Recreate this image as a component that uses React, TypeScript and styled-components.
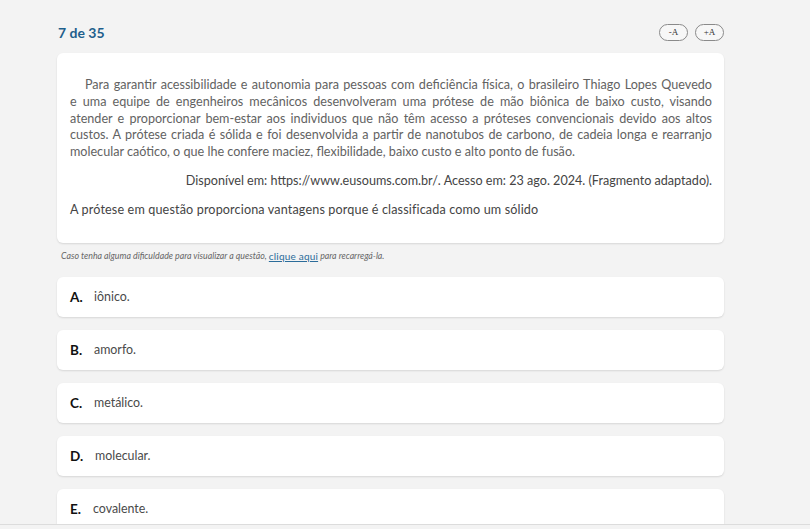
import React from 'react';
import styled, { createGlobalStyle } from 'styled-components';

const GlobalStyle = createGlobalStyle`
  html, body {
    margin: 0;
    padding: 0;
    background: #f3f3f3;
  }
  body {
    font-family: 'Lato', 'Noto Sans', sans-serif;
  }
`;

const Page = styled.div`
  height: 525px;
  overflow: hidden;
  border-bottom: 1px solid #dcdcdc;
  box-sizing: border-box;
`;

const Column = styled.div`
  width: 667px;
  margin-left: 57px;
  display: flex;
  flex-direction: column;
`;

const Header = styled.div`
  display: flex;
  align-items: center;
  justify-content: space-between;
  height: 33px;
  padding-top: 16px;
  margin-bottom: 4px;
`;

const Counter = styled.div`
  font-size: 14px;
  font-weight: 700;
  color: #1e5f8c;
  padding-left: 1px;
`;

const FontButtons = styled.div`
  display: flex;
  gap: 7px;
`;

const FontButton = styled.button`
  width: 29px;
  height: 17px;
  padding: 0;
  border: 1px solid #8a8a8a;
  border-radius: 9px;
  background: #f7f7f7;
  font-family: 'Liberation Serif', serif;
  font-size: 9px;
  color: #333;
  line-height: 15px;
`;

const Card = styled.div`
  background: #fff;
  border-radius: 6px;
  box-shadow: 0 1px 2px rgba(0, 0, 0, 0.12);
`;

const Statement = styled(Card)`
  padding: 24px 12px 24px 13px;
  color: #555;
  font-size: 12.6px;
  line-height: 16.8px;
`;

const Paragraph = styled.p`
  margin: 0;
  color: #626262;
`;

const Line = styled.span<{ $indent?: boolean; $last?: boolean }>`
  display: block;
  text-align: justify;
  text-align-last: ${(p) => (p.$last ? 'left' : 'justify')};
  text-indent: ${(p) => (p.$indent ? '15px' : '0')};
`;

const Source = styled.p`
  margin: 12px 0 0;
  text-align: right;
  color: #444;
`;

const Question = styled.p`
  margin: 12px 0 0;
  color: #444;
  letter-spacing: 0.14px;
`;

const Note = styled.div`
  margin: 6px 0 14px 4px;
  font-size: 8.8px;
  font-style: italic;
  color: #666;
  height: 14px;
  display: flex;
  align-items: center;
  white-space: pre;
`;

const NoteLink = styled.a`
  font-style: normal;
  font-size: 10px;
  color: #2b6c9a;
  text-decoration: underline;
  letter-spacing: 0.2px;
`;

const Options = styled.div`
  display: flex;
  flex-direction: column;
  gap: 13px;
`;

const Option = styled(Card)`
  height: 40px;
  display: flex;
  align-items: center;
  padding-left: 13px;
`;

const Letter = styled.span`
  width: 24px;
  font-size: 13.5px;
  font-weight: 700;
  color: #111;
`;

const OptionText = styled.span<{ $shift?: number }>`
  font-size: 12.4px;
  color: #4a4a4a;
  margin-left: ${(p) => p.$shift ?? 0}px;
`;

const paragraphLines = [
  'Para garantir acessibilidade e autonomia para pessoas com deficiência física, o brasileiro Thiago Lopes Quevedo',
  'e uma equipe de engenheiros mecânicos desenvolveram uma prótese de mão biônica de baixo custo, visando',
  'atender e proporcionar bem-estar aos individuos que não têm acesso a próteses convencionais devido aos altos',
  'custos. A prótese criada é sólida e foi desenvolvida a partir de nanotubos de carbono, de cadeia longa e rearranjo',
  'molecular caótico, o que lhe confere maciez, flexibilidade, baixo custo e alto ponto de fusão.',
];

const options = [
  { letter: 'A.', text: 'iônico.', shift: 0 },
  { letter: 'B.', text: 'amorfo.', shift: 0 },
  { letter: 'C.', text: 'metálico.', shift: 0 },
  { letter: 'D.', text: 'molecular.', shift: 1 },
  { letter: 'E.', text: 'covalente.', shift: -1 },
];

export default function App() {
  return (
    <>
      <GlobalStyle />
      <Page>
        <Column>
          <Header>
            <Counter>7 de 35</Counter>
            <FontButtons>
              <FontButton>-A</FontButton>
              <FontButton>+A</FontButton>
            </FontButtons>
          </Header>
          <Statement>
            <Paragraph>
              {paragraphLines.map((line, i) => (
                <Line key={i} $indent={i === 0} $last={i === paragraphLines.length - 1}>
                  {line}
                </Line>
              ))}
            </Paragraph>
            <Source>
              Disponível em: https://www.eusoums.com.br/. Acesso em: 23 ago. 2024. (Fragmento adaptado).
            </Source>
            <Question>A prótese em questão proporciona vantagens porque é classificada como um sólido</Question>
          </Statement>
          <Note>
            {'Caso tenha alguma dificuldade para visualizar a questão, '}
            <NoteLink>clique aqui</NoteLink>
            {' para recarregá-la.'}
          </Note>
          <Options>
            {options.map((o) => (
              <Option key={o.letter}>
                <Letter>{o.letter}</Letter>
                <OptionText $shift={o.shift}>{o.text}</OptionText>
              </Option>
            ))}
          </Options>
        </Column>
      </Page>
    </>
  );
}
